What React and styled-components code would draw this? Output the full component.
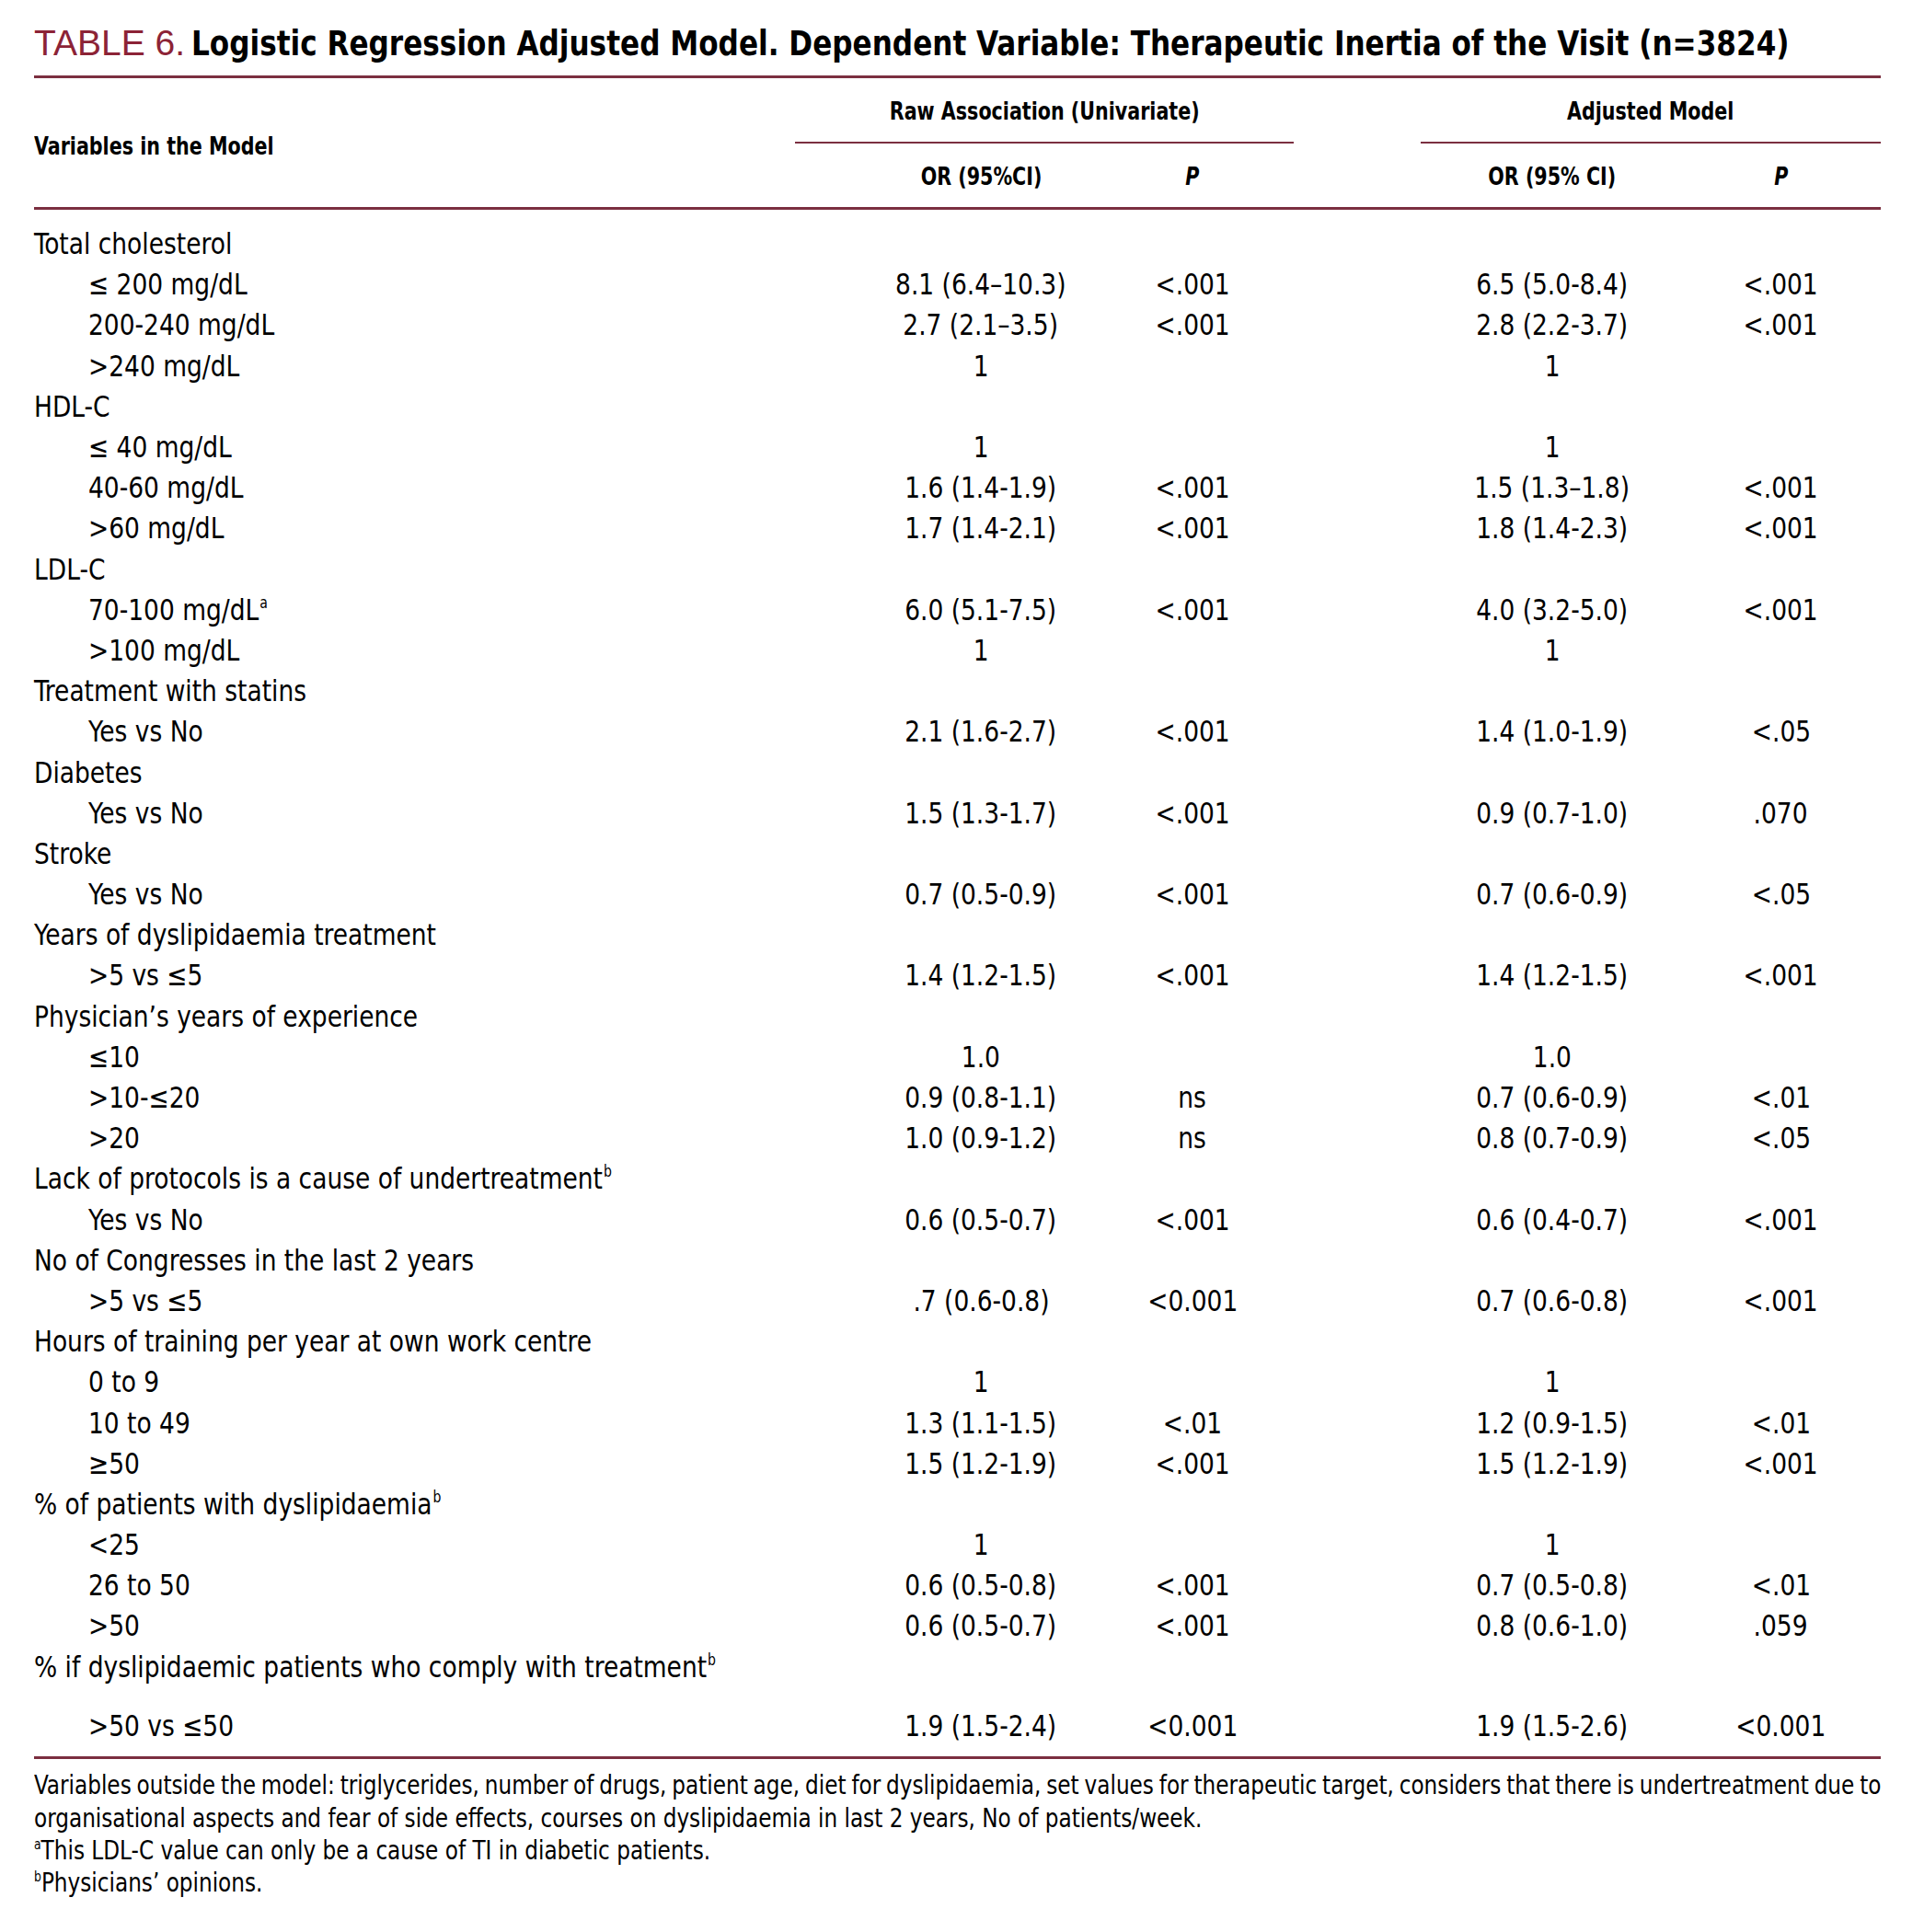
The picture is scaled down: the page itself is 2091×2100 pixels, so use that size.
import React from "react";
import styled, { createGlobalStyle } from "styled-components";

const MAROON = "#7b2f40";
const COND = `"DejaVu Sans Condensed", "Liberation Sans Narrow", "Liberation Sans", Arial, sans-serif`;

const GlobalStyle = createGlobalStyle`
  html, body {
    margin: 0;
    padding: 0;
    background: #ffffff;
    overflow: hidden;
  }
  body {
    font-family: ${COND};
    color: #000000;
  }
`;

const rows = [
  { label: "Total cholesterol" },
  { label: "≤ 200 mg/dL", sub: true, or1: "8.1 (6.4–10.3)", p1: "<.001", or2: "6.5 (5.0-8.4)", p2: "<.001" },
  { label: "200-240 mg/dL", sub: true, or1: "2.7 (2.1–3.5)", p1: "<.001", or2: "2.8 (2.2-3.7)", p2: "<.001" },
  { label: ">240 mg/dL", sub: true, or1: "1", or2: "1" },
  { label: "HDL-C" },
  { label: "≤ 40 mg/dL", sub: true, or1: "1", or2: "1" },
  { label: "40-60 mg/dL", sub: true, or1: "1.6 (1.4-1.9)", p1: "<.001", or2: "1.5 (1.3–1.8)", p2: "<.001" },
  { label: ">60 mg/dL", sub: true, or1: "1.7 (1.4-2.1)", p1: "<.001", or2: "1.8 (1.4-2.3)", p2: "<.001" },
  { label: "LDL-C" },
  { label: "70-100 mg/dL", mark: "a", sub: true, or1: "6.0 (5.1-7.5)", p1: "<.001", or2: "4.0 (3.2-5.0)", p2: "<.001" },
  { label: ">100 mg/dL", sub: true, or1: "1", or2: "1" },
  { label: "Treatment with statins" },
  { label: "Yes vs No", sub: true, or1: "2.1 (1.6-2.7)", p1: "<.001", or2: "1.4 (1.0-1.9)", p2: "<.05" },
  { label: "Diabetes" },
  { label: "Yes vs No", sub: true, or1: "1.5 (1.3-1.7)", p1: "<.001", or2: "0.9 (0.7-1.0)", p2: ".070" },
  { label: "Stroke" },
  { label: "Yes vs No", sub: true, or1: "0.7 (0.5-0.9)", p1: "<.001", or2: "0.7 (0.6-0.9)", p2: "<.05" },
  { label: "Years of dyslipidaemia treatment" },
  { label: ">5 vs ≤5", sub: true, or1: "1.4 (1.2-1.5)", p1: "<.001", or2: "1.4 (1.2-1.5)", p2: "<.001" },
  { label: "Physician’s years of experience" },
  { label: "≤10", sub: true, or1: "1.0", or2: "1.0" },
  { label: ">10-≤20", sub: true, or1: "0.9 (0.8-1.1)", p1: "ns", or2: "0.7 (0.6-0.9)", p2: "<.01" },
  { label: ">20", sub: true, or1: "1.0 (0.9-1.2)", p1: "ns", or2: "0.8 (0.7-0.9)", p2: "<.05" },
  { label: "Lack of protocols is a cause of undertreatment", mark: "b" },
  { label: "Yes vs No", sub: true, or1: "0.6 (0.5-0.7)", p1: "<.001", or2: "0.6 (0.4-0.7)", p2: "<.001" },
  { label: "No of Congresses in the last 2 years" },
  { label: ">5 vs ≤5", sub: true, or1: ".7 (0.6-0.8)", p1: "<0.001", or2: "0.7 (0.6-0.8)", p2: "<.001" },
  { label: "Hours of training per year at own work centre" },
  { label: "0 to 9", sub: true, or1: "1", or2: "1" },
  { label: "10 to 49", sub: true, or1: "1.3 (1.1-1.5)", p1: "<.01", or2: "1.2 (0.9-1.5)", p2: "<.01" },
  { label: "≥50", sub: true, or1: "1.5 (1.2-1.9)", p1: "<.001", or2: "1.5 (1.2-1.9)", p2: "<.001" },
  { label: "% of patients with dyslipidaemia", mark: "b" },
  { label: "<25", sub: true, or1: "1", or2: "1" },
  { label: "26 to 50", sub: true, or1: "0.6 (0.5-0.8)", p1: "<.001", or2: "0.7 (0.5-0.8)", p2: "<.01" },
  { label: ">50", sub: true, or1: "0.6 (0.5-0.7)", p1: "<.001", or2: "0.8 (0.6-1.0)", p2: ".059" },
  { label: "% if dyslipidaemic patients who comply with treatment", mark: "b" },
  { label: ">50 vs ≤50", sub: true, spaced: true, or1: "1.9 (1.5-2.4)", p1: "<0.001", or2: "1.9 (1.5-2.6)", p2: "<0.001" },
];

const App = () => {
  return (
    <>
      <GlobalStyle />
      <Page>
        {/* title */}
        <Title>
          <TitleLabel>TABLE 6.</TitleLabel>
          <TitleText>
            Logistic Regression Adjusted Model. Dependent Variable: Therapeutic Inertia of the Visit (n=3824)
          </TitleText>
        </Title>
        <Rule $gap={10} />

        {/* header */}
        <Header>
          <HeaderLabel>
            <Squeeze $x={0.85} $origin="left">Variables in the Model</Squeeze>
          </HeaderLabel>
          <HeaderRight>
            <GroupRow>
              <Group $width={542}>
                <Squeeze $x={0.85}>Raw Association (Univariate)</Squeeze>
              </Group>
              <Group $width={500}>
                <Squeeze $x={0.85}>Adjusted Model</Squeeze>
              </Group>
            </GroupRow>
            <SubRow>
              <span />
              <HeadCell><Squeeze $x={0.85}>OR (95%CI)</Squeeze></HeadCell>
              <HeadCell $italic><Squeeze $x={0.85}>P</Squeeze></HeadCell>
              <span />
              <HeadCell><Squeeze $x={0.85}>OR (95% CI)</Squeeze></HeadCell>
              <HeadCell $italic><Squeeze $x={0.85}>P</Squeeze></HeadCell>
            </SubRow>
          </HeaderRight>
        </Header>
        <Rule />

        {/* body */}
        <Body>
          {rows.map((row, i) => (
            <Row key={i} $spaced={row.spaced}>
              <Label $sub={row.sub}>
                <Squeeze $x={0.92} $origin="left">
                  {row.label}
                  {row.mark && <Sup>{row.mark}</Sup>}
                </Squeeze>
              </Label>
              <Cell><Squeeze $x={0.92}>{row.or1}</Squeeze></Cell>
              <Cell><Squeeze $x={0.92}>{row.p1}</Squeeze></Cell>
              <span />
              <Cell><Squeeze $x={0.92}>{row.or2}</Squeeze></Cell>
              <Cell><Squeeze $x={0.92}>{row.p2}</Squeeze></Cell>
            </Row>
          ))}
        </Body>
        <Rule />

        {/* footnotes */}
        <Notes>
          <NoteLine>
            <NoteText $justify>
              Variables outside the model: triglycerides, number of drugs, patient age, diet for dyslipidaemia, set values for therapeutic target, considers that there is undertreatment due to
            </NoteText>
          </NoteLine>
          <NoteLine>
            <NoteText>
              organisational aspects and fear of side effects, courses on dyslipidaemia in last 2 years, No of patients/week.
            </NoteText>
          </NoteLine>
          <NoteLine>
            <NoteText>
              <NoteSup>a</NoteSup>This LDL-C value can only be a cause of TI in diabetic patients.
            </NoteText>
          </NoteLine>
          <NoteLine>
            <NoteText>
              <NoteSup>b</NoteSup>Physicians’ opinions.
            </NoteText>
          </NoteLine>
        </Notes>
      </Page>
    </>
  );
};

const Page = styled.div`
  width: 2007px;
  padding: 22px 47px 0 37px;
`;

const Squeeze = styled.span`
  display: inline-block;
  white-space: nowrap;
  transform: scaleX(${({ $x }) => $x});
  transform-origin: ${({ $origin }) => $origin || "center"};
`;

const Title = styled.h1`
  margin: 0;
  height: 50px;
  display: flex;
  align-items: center;
  white-space: nowrap;
  font-weight: 400;
`;

const TitleLabel = styled.span`
  font-family: "Liberation Sans", Arial, sans-serif;
  font-size: 39px;
  font-weight: 400;
  color: #8c2336;
  margin-right: 7px;
`;

const TitleText = styled.span`
  display: inline-block;
  font-family: ${COND};
  font-size: 37px;
  font-weight: 700;
  color: #000000;
  transform: scaleX(0.935);
  transform-origin: left;
`;

const Rule = styled.div`
  height: 3px;
  background: ${MAROON};
  margin-top: ${({ $gap }) => $gap || 0}px;
`;

const Header = styled.div`
  display: flex;
  height: 140px;
`;

const HeaderLabel = styled.div`
  width: 827px;
  display: flex;
  align-items: center;
  padding-top: 6px;
  font-size: 27px;
  font-weight: 700;
`;

const HeaderRight = styled.div`
  flex: 1;
  display: flex;
  flex-direction: column;
`;

const GroupRow = styled.div`
  display: flex;
  justify-content: space-between;
  height: 71px;
`;

const Group = styled.div`
  width: ${({ $width }) => $width}px;
  display: flex;
  align-items: center;
  justify-content: center;
  padding-top: 2px;
  box-sizing: border-box;
  border-bottom: 2.5px solid ${MAROON};
  font-size: 27px;
  font-weight: 700;
`;

const SubRow = styled.div`
  flex: 1;
  display: grid;
  grid-template-columns: 62px 280px 180px 161px 280px 217px;
  align-items: center;
  padding-top: 2px;
`;

const HeadCell = styled.div`
  text-align: center;
  font-size: 27px;
  font-weight: 700;
  font-style: ${({ $italic }) => ($italic ? "italic" : "normal")};
`;

const Body = styled.div`
  padding-top: 15px;
  padding-bottom: 11px;
`;

const Row = styled.div`
  display: grid;
  grid-template-columns: 889px 280px 180px 161px 280px 217px;
  align-items: center;
  height: 44.2px;
  margin-top: ${({ $spaced }) => ($spaced ? "20.3px" : "0")};
  font-size: 32px;
  white-space: nowrap;
`;

const Label = styled.div`
  padding-left: ${({ $sub }) => ($sub ? "59px" : "0")};
`;

const Sup = styled.sup`
  font-size: 17px;
  vertical-align: 13px;
  line-height: 0;
  margin-left: 1px;
`;

const Cell = styled.div`
  text-align: center;
`;

const Notes = styled.div`
  padding-top: 11px;
`;

const NoteLine = styled.div`
  height: 35.3px;
  line-height: 35.3px;
  font-size: 28px;
  overflow: hidden;
`;

const NoteText = styled.div`
  width: ${({ $justify }) => ($justify ? "2182px" : "auto")};
  white-space: nowrap;
  word-spacing: ${({ $justify }) => ($justify ? "-6px" : "normal")};
  text-align: ${({ $justify }) => ($justify ? "justify" : "left")};
  text-align-last: ${({ $justify }) => ($justify ? "justify" : "auto")};
  transform: scaleX(0.92);
  transform-origin: left;
`;

const NoteSup = styled.sup`
  font-size: 15px;
  vertical-align: 11px;
  line-height: 0;
`;

export default App;
